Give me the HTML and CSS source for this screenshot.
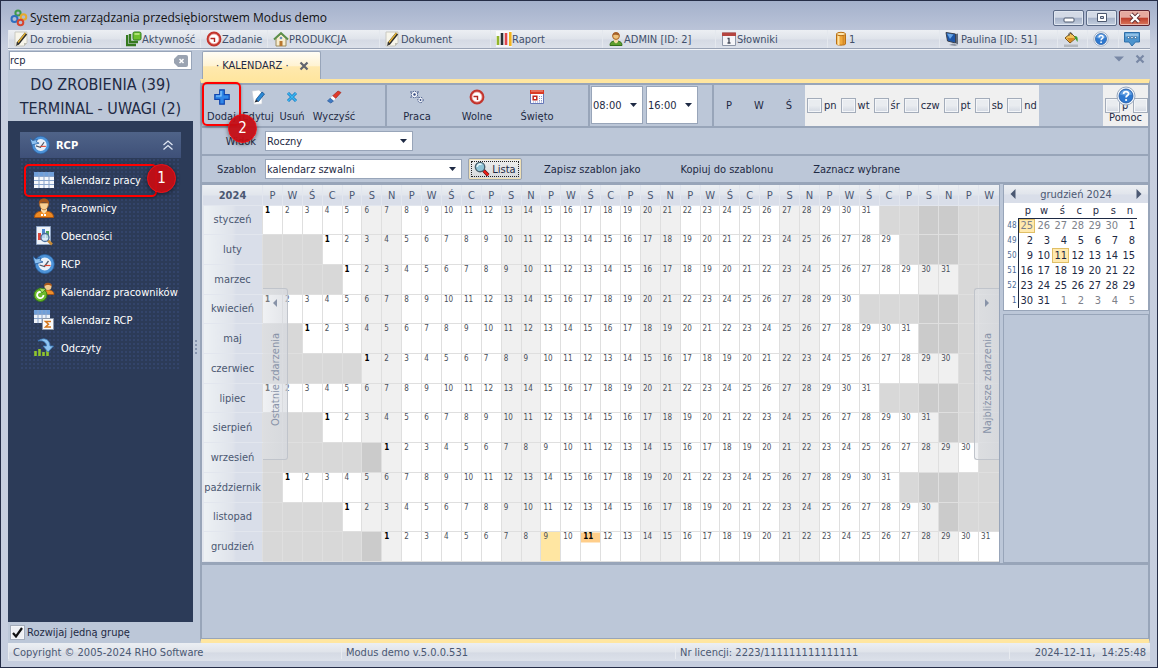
FILE: index.html
```html
<!DOCTYPE html>
<html lang="pl">
<head>
  <meta charset="UTF-8" />
  <meta name="viewport" content="width=device-width, initial-scale=1" />
  <title>System zarządzania przedsiębiorstwem Modus demo</title>
  <link rel="stylesheet" href="styles.css">
</head>
<body>

<!-- Icon set -->
<svg class="sprite" aria-hidden="true">
  <symbol id="i-logo" viewBox="0 0 18 18">
    <g fill="none" stroke-width="2">
      <circle cx="8" cy="4" r="2.6" stroke="#3f9a4a"/>
      <circle cx="13.5" cy="8" r="2.8" stroke="#e6a92c"/>
      <circle cx="4.5" cy="10" r="3" stroke="#2f6fc0"/>
      <circle cx="10.5" cy="13.5" r="2.8" stroke="#d8452f"/>
    </g>
  </symbol>
  <symbol id="i-note" viewBox="0 0 16 16">
    <path d="M1 1h12v11l-3 3H1z" fill="#f7f5ea" stroke="#c9c9c2"/>
    <path d="M13 12l-3 3v-3z" fill="#bdbdb4"/>
    <path d="M3.500 13L12 2.500" stroke="#2b2b2b" stroke-width="3"/>
    <path d="M4 11.500L11.500 2" stroke="#e9b738" stroke-width="1.300"/>
    <path d="M2 15l.8-3 2 1.500z" fill="#333"/>
  </symbol>
  <symbol id="i-activity" viewBox="0 0 16 16">
    <path d="M1 4v10h9M4 3v8h8" fill="none" stroke="#35791f" stroke-width="2.400"/>
    <rect x="7" y="1" width="8" height="8" rx="1.500" fill="#6fc02c" stroke="#2f7d1c"/>
    <path d="M8.500 3h5" stroke="#c5ee8e" stroke-width="1.500"/>
  </symbol>
  <symbol id="i-clock" viewBox="0 0 16 16">
    <circle cx="8" cy="8" r="6.200" fill="#fff" stroke="#c3342c" stroke-width="2.400"/>
    <circle cx="8" cy="8" r="5" fill="none" stroke="#eaa19c" stroke-width=".8"/>
    <path d="M4.500 7.500H8.500V11" fill="none" stroke="#b3251f" stroke-width="1.400"/>
  </symbol>
  <symbol id="i-house" viewBox="0 0 16 16">
    <path d="M3 7v8h10V7L8 3z" fill="#f6edcf" stroke="#9b8a5e"/>
    <path d="M1 8.500L8 2l7 6.500" fill="none" stroke="#5c8f4a" stroke-width="2"/>
    <path d="M6.500 15V10h3v5z" fill="#b9772f"/>
    <circle cx="8" cy="7" r="1.300" fill="#6c94bd"/>
  </symbol>
  <symbol id="i-report" viewBox="0 0 16 16">
    <path d="M0 0h16v16H0z" fill="#fff" opacity=".7"/>
    <path d="M2 5v9" stroke="#93b52c" stroke-width="2.600"/>
    <path d="M6 2v12" stroke="#2a2f35" stroke-width="2.600"/>
    <path d="M10 2v12" stroke="#e0474c" stroke-width="2.600"/>
    <path d="M14.300 1v14" stroke="#f2b31c" stroke-width="2.600"/>
  </symbol>
  <symbol id="i-user" viewBox="0 0 16 16">
    <path d="M2 14.500c0-4 3-4.500 6-4.500s6 .5 6 4.500z" fill="#5d9e2c" stroke="#346f1b"/>
    <path d="M6 8h4v3l-2 1.500L6 11z" fill="#f3d9a4"/>
    <circle cx="8" cy="5" r="3.400" fill="#efc27a" stroke="#a8642a"/>
    <path d="M4.500 4.500C4.500 0 11.500 0 11.500 4.500 9 4.500 7 3 4.500 4.500z" fill="#a4602a"/>
  </symbol>
  <symbol id="i-dict" viewBox="0 0 16 16">
    <path d="M1.500 2h13v12.500h-13z" fill="#f5f5f8" stroke="#8e97a8"/>
    <path d="M1 1.500h14V5H1z" fill="#b5443f"/>
    <path d="M6.500 7.500H8V12M6.500 12h3" fill="none" stroke="#444b59" stroke-width="1.300"/>
  </symbol>
  <symbol id="i-db" viewBox="0 0 16 16">
    <path d="M3.500 3v10c0 1.500 9 1.500 9 0V3z" fill="#f0a83a" stroke="#b86f14"/>
    <path d="M5.500 4v10" stroke="#fde1a3" stroke-width="2"/>
    <path d="M10.500 4v10" stroke="#c67a1e" stroke-width="2" opacity=".6"/>
    <ellipse cx="8" cy="3" rx="4.500" ry="1.700" fill="#fde4ab" stroke="#b86f14"/>
  </symbol>
  <symbol id="i-monitor" viewBox="0 0 16 16">
    <path d="M1 1.500l9.500 1.500v9L2.500 10z" fill="#1e56a8" stroke="#3b4250"/>
    <path d="M2 2.500l6.500 1L5 8z" fill="#69a6e6"/>
    <path d="M11 3l2-.5v11l-2-1z" fill="#626b7a"/>
    <path d="M4 14l6 1 3-1-5-1.500z" fill="#8f97a6"/>
  </symbol>
  <symbol id="i-bucket" viewBox="0 0 16 16">
    <path d="M1 13.500h14V16H1z" fill="#b3b8bf"/>
    <path d="M2 7l6-5 5 5-6 5z" fill="#f1c25a" stroke="#7b5417"/>
    <path d="M4 7h8l-5 4.500z" fill="#d98a24"/>
    <path d="M6 5C5 1 9 0 9 4" fill="none" stroke="#555"/>
    <path d="M12 5c3 0 3 3 2.500 6-1-1-1.500-3-3-4z" fill="#3c9a32"/>
  </symbol>
  <symbol id="i-help" viewBox="0 0 20 20">
    <circle cx="10" cy="10" r="9" fill="#f4f8fd" stroke="#97a7bd"/>
    <circle cx="10" cy="10" r="7" fill="#2e78cf" stroke="#1f569e" stroke-width=".8"/>
    <path d="M4 8.500a6.200 6.200 0 0 1 12 0c-4 1.500-8 1.500-12 0z" fill="#76aeea" opacity=".7"/>
    <path d="M7.600 8c0-3.200 5-3 5-.3 0 1.800-2.500 1.800-2.500 3.800" fill="none" stroke="#fff" stroke-width="1.800"/>
    <circle cx="10.100" cy="14" r="1.100" fill="#fff"/>
  </symbol>
  <symbol id="i-chat" viewBox="0 0 16 16">
    <path d="M.5 1.500h15v9.500h-4L8 15l-3-4H.5z" fill="#4d94cd" stroke="#2f6fa8"/>
    <path d="M1.500 2.500h13v3h-13z" fill="#8fc0e6"/>
    <path d="M3.500 5.500h2v2h-2zM7 5.500h2v2H7zM10.500 5.500h2v2h-2z" fill="#fff" stroke="#2c5f91" stroke-width=".6"/>
  </symbol>
  <symbol id="i-plus" viewBox="0 0 16 16">
    <path d="M5.700.8h4.600v4.900h4.900v4.600h-4.900v4.900H5.700v-4.900H.8V5.700h4.900z" fill="#2f86e8" stroke="#1046b0" stroke-width="1.200"/>
    <path d="M7 2v5H2" fill="none" stroke="#8fd0ff" stroke-width="1.200"/>
  </symbol>
  <symbol id="i-edit" viewBox="0 0 16 16">
    <path d="M2 2l7-1 3 3v11l-8 .5z" fill="#fff" stroke="#c5ccd6" stroke-width=".7"/>
    <path d="M6 10.500L12 3l2.500 2L8.500 12.500z" fill="#2a8ad6" stroke="#17508f" stroke-width=".8"/>
    <path d="M4.500 13.500L6 10.500l2.500 2z" fill="#232b38"/>
  </symbol>
  <symbol id="i-delete" viewBox="0 0 16 16">
    <path d="M4 4l8 8M12 4l-8 8" stroke="#1679c4" stroke-width="3"/>
    <path d="M4 4l8 8M12 4l-8 8" stroke="#3cb7ef" stroke-width="1.500"/>
  </symbol>
  <symbol id="i-eraser" viewBox="0 0 16 16">
    <path d="M6.500 7L12 2l3 1.500L9.500 9.500z" fill="#e0392a" stroke="#a3261b" stroke-width=".7"/>
    <path d="M6.500 7l3 2.500L7.500 12 4.200 9.200z" fill="#fff"/>
    <path d="M4.200 9.200L7.500 12l-2.700 2L1.500 12z" fill="#3f7ac4" stroke="#2c5a9a" stroke-width=".7"/>
  </symbol>
  <symbol id="i-gears" viewBox="0 0 16 16">
    <g fill="#f2f5fa" stroke="#34497f" stroke-dasharray="1.500 1">
      <circle cx="5.500" cy="5.500" r="3.200"/>
      <circle cx="11.500" cy="11" r="2.600"/>
    </g>
    <circle cx="5.500" cy="5.500" r="1.200" fill="#34497f"/>
    <path d="M2 2v2M9 2v2M2 7.500V9M9 7.500V9" stroke="#34497f" stroke-width=".8"/>
    <circle cx="11.500" cy="11" r=".9" fill="#34497f"/>
  </symbol>
  <symbol id="i-holiday" viewBox="0 0 16 16">
    <path d="M1.500 1.500h13v13h-13z" fill="#fbfbff" stroke="#6577b8"/>
    <path d="M1 1h14v4H1z" fill="#d93a24"/>
    <path d="M2 2h12" stroke="#f6a08f"/>
    <path d="M4.200 7.200h3.600v3.600H4.200z" fill="#fff" stroke="#c2251c" stroke-width="1.500"/>
    <path d="M10 7.500h4M10 9.500h4M10 11.500h4M4 13h10" stroke="#8f9cc9" stroke-dasharray="1 1"/>
  </symbol>
  <symbol id="i-magnifier" viewBox="0 0 18 18">
    <path d="M10.500 10.500L16 16" stroke="#5b1110" stroke-width="4"/>
    <path d="M11 11l5 5" stroke="#ee1d16" stroke-width="2.600"/>
    <circle cx="6.800" cy="6.800" r="5.300" fill="#8fc5d8" stroke="#49606d" stroke-width="1.500"/>
    <path d="M3.500 6.500C4 3.500 7 3 8.500 4" fill="none" stroke="#e6f6fb" stroke-width="1.800"/>
  </symbol>
  <symbol id="i-table" viewBox="0 0 22 22">
    <path d="M1 3h20v16H1z" fill="#f6f8fb"/>
    <path d="M1 3h20v4H1z" fill="#6f9fda"/>
    <path d="M6 3v16M11 3v16M16 3v16M1 7.500h20M1 11.500h20M1 15.500h20" stroke="#8aa5cc"/>
  </symbol>
  <symbol id="i-worker" viewBox="0 0 22 22">
    <path d="M1.500 20.500c0-5 4-6.500 9.500-6.500s9.500 1.500 9.500 6.500z" fill="#ee8a22" stroke="#a9520f"/>
    <path d="M8 11h6v3l-3 3-3-3z" fill="#f8d9a6"/>
    <path d="M6.500 6c0 9 9 9 9 0z" fill="#f7cf94" stroke="#b36b2a" stroke-width=".8"/>
    <path d="M6 7C4.500-.5 17.500-.5 16 7c-2-2.500-8-2.500-10 0z" fill="#a7571c"/>
    <path d="M8 18h6" stroke="#fff" stroke-width="1.800" stroke-dasharray="2 1"/>
  </symbol>
  <symbol id="i-presence" viewBox="0 0 22 22">
    <path d="M3.500 1.500h14v18h-14z" fill="#eef3f9" stroke="#8fa4c4"/>
    <path d="M5 8h3v7H5z" fill="#d9463d"/>
    <path d="M9 4h3v9H9z" fill="#4d86cf"/>
    <path d="M13 6h3v7h-3z" fill="#4fa45a"/>
    <path d="M14.500 15l4.500 4.500" stroke="#c78a35" stroke-width="2.500"/>
    <circle cx="12" cy="12.500" r="4" fill="#cfe6f6" fill-opacity=".8" stroke="#4a6e9c" stroke-width="1.300"/>
  </symbol>
  <symbol id="i-history" viewBox="0 0 22 22">
    <circle cx="11.800" cy="11" r="8" fill="#eaf1f9" stroke="#4d93d8" stroke-width="3"/>
    <circle cx="11.800" cy="11" r="9.600" fill="none" stroke="#2a64a8" stroke-width=".7"/>
    <path d="M0 3.500l2 7.500 8-2-3-1.500 1-2.500-5 1z" fill="#8dc2f1" stroke="#235b9d" stroke-width=".8"/>
    <path d="M6.500 12l5 1.500L15.500 8" fill="none" stroke="#4f5968" stroke-width="1.300"/>
    <path d="M11.500 12.500h6" stroke="#e3452e" stroke-width="1.200"/>
  </symbol>
  <symbol id="i-workercal" viewBox="0 0 22 22">
    <path d="M9 13.500c0-4 3-4.500 6-4.500s6 1 6 4.500z" fill="#ef8f2b" stroke="#a9520f" stroke-width=".8"/>
    <circle cx="15" cy="5.500" r="3.500" fill="#f4ca8d"/>
    <path d="M11 5.500C10.500.5 19.500.5 19 5.500c-2-2-6-2-8 0z" fill="#a7571c"/>
    <circle cx="7.500" cy="14" r="6.500" fill="#6dbb2c" stroke="#34791a"/>
    <path d="M10.500 14a3.200 3.200 0 1 1-2-3" fill="none" stroke="#fff" stroke-width="1.800"/>
    <path d="M6 7l7 1-4 4z" fill="#a4dc5e" stroke="#34791a" stroke-width=".7"/>
  </symbol>
  <symbol id="i-calrcp" viewBox="0 0 22 22">
    <path d="M1 1h16v13H1z" fill="#edf2f9"/>
    <path d="M1 1h16v4H1z" fill="#6f9fda"/>
    <path d="M5 1v13M9 1v13M13 1v13M1 5.500h16M1 9.500h16" stroke="#8aa5cc"/>
    <path d="M9.500 9.500h11v11h-11z" fill="#fbfbfb" stroke="#8d98aa"/>
    <path d="M18 12.500h-5.500l3 2.700-3 2.800H18" fill="none" stroke="#d3761d" stroke-width="1.500"/>
  </symbol>
  <symbol id="i-readings" viewBox="0 0 22 22">
    <path d="M2.500 19v-5M6.500 19v-7M10.500 19v-4M14.500 19v-6" stroke="#8fc52e" stroke-width="2.600"/>
    <path d="M5 4c6-4.500 12-1.500 12 5h3.500L15 15l-5-6h3.500c0-4-4-6-8.500-5z" fill="#8fc4ef" stroke="#3a77b8" stroke-width=".8"/>
  </symbol>
  <symbol id="i-collapse" viewBox="0 0 12 12">
    <path d="M1.500 6L6 2l4.500 4M1.500 10.500L6 6.500l4.500 4" fill="none" stroke="#dfe6f3" stroke-width="1.300"/>
  </symbol>
  <symbol id="i-x" viewBox="0 0 10 10">
    <path d="M1.500 1.500l7 7M8.500 1.500l-7 7" stroke="currentColor" stroke-width="2.200"/>
  </symbol>
  <symbol id="i-down" viewBox="0 0 10 6"><path d="M0 .5h10L5 5.500z" fill="currentColor"/></symbol>
  <symbol id="i-left" viewBox="0 0 6 10"><path d="M5.500 0v10L.5 5z" fill="currentColor"/></symbol>
  <symbol id="i-right" viewBox="0 0 6 10"><path d="M.5 0v10l5-5z" fill="currentColor"/></symbol>
</svg>

<div class="window">
  <header class="titlebar">
    <svg class="icon-logo"><use href="#i-logo"/></svg>
    <h1>System zarządzania przedsiębiorstwem Modus demo</h1>
    <div class="window-buttons">
      <button aria-label="Minimalizuj"><svg viewBox="0 0 14 12"><rect x="2" y="6" width="10" height="4" rx="1" fill="#fff" stroke="#4c586e"/></svg></button>
      <button aria-label="Maksymalizuj"><svg viewBox="0 0 14 12"><path d="M2.500 1.500h9v8h-9zM5.500 4.500h3v2h-3z" fill="#fff" fill-rule="evenodd" stroke="#4c586e"/></svg></button>
      <button class="close" aria-label="Zamknij"><svg viewBox="0 0 14 12"><path d="M3 2l8 8M11 2l-8 8" stroke="#5c2a30" stroke-width="4"/><path d="M3 2l8 8M11 2l-8 8" stroke="#fff" stroke-width="2.400"/></svg></button>
    </div>
  </header>

  <nav class="menubar">
    <button><svg><use href="#i-note"/></svg>Do zrobienia</button>
    <button><svg><use href="#i-activity"/></svg>Aktywność</button>
    <button><svg><use href="#i-clock"/></svg>Zadanie</button>
    <button><svg><use href="#i-house"/></svg>PRODUKCJA</button>
    <button><svg><use href="#i-note"/></svg>Dokument</button>
    <button><svg><use href="#i-report"/></svg>Raport</button>
    <button><svg><use href="#i-user"/></svg>ADMIN [ID: 2]</button>
    <button><svg><use href="#i-dict"/></svg>Słowniki</button>
    <button><svg><use href="#i-db"/></svg>1</button>
    <button><svg><use href="#i-monitor"/></svg>Paulina [ID: 51]</button>
    <button aria-label="Kolory"><svg><use href="#i-bucket"/></svg></button>
    <button aria-label="Pomoc"><svg><use href="#i-help"/></svg></button>
    <button aria-label="Wiadomości"><svg><use href="#i-chat"/></svg></button>
  </nav>

  <div class="workspace">
    <aside class="sidebar">
      <div class="search">
        <input type="text" value="rcp" aria-label="Szukaj w menu">
        <button aria-label="Wyczyść"><svg viewBox="0 0 14 12"><path d="M4 0h8a2 2 0 0 1 2 2v8a2 2 0 0 1-2 2H4L0 8V4z" fill="#9aa3b1"/><path d="M5.500 4l4 4M9.500 4l-4 4" stroke="#fff" stroke-width="1.500"/></svg></button>
      </div>
      <a class="counter" href="#">DO ZROBIENIA (39)</a>
      <a class="counter" href="#">TERMINAL - UWAGI (2)</a>
      <nav class="tree">
        <button class="group">
          <svg class="icon-lg"><use href="#i-history"/></svg>RCP
          <svg class="collapse"><use href="#i-collapse"/></svg>
        </button>
        <ul>
          <li class="marked">
            <a href="#"><svg><use href="#i-table"/></svg>Kalendarz pracy</a>
            <span class="step step-one">1</span>
          </li>
          <li><a href="#"><svg><use href="#i-worker"/></svg>Pracownicy</a></li>
          <li><a href="#"><svg><use href="#i-presence"/></svg>Obecności</a></li>
          <li><a href="#"><svg><use href="#i-history"/></svg>RCP</a></li>
          <li><a href="#"><svg><use href="#i-workercal"/></svg>Kalendarz pracowników</a></li>
          <li><a href="#"><svg><use href="#i-calrcp"/></svg>Kalendarz RCP</a></li>
          <li><a href="#"><svg><use href="#i-readings"/></svg>Odczyty</a></li>
        </ul>
      </nav>
      <label class="single"><input type="checkbox" checked>Rozwijaj jedną grupę</label>
    </aside>

    <div class="splitter"><i></i><i></i><i></i><i></i></div>

    <main class="content">
      <div class="tabs">
        <div class="tab">
          <span>· KALENDARZ ·</span>
          <button aria-label="Zamknij kartę"><svg><use href="#i-x"/></svg></button>
        </div>
        <div class="tab-tools">
          <button aria-label="Lista kart"><svg class="arrow-down"><use href="#i-down"/></svg></button>
          <button aria-label="Zamknij"><svg><use href="#i-x"/></svg></button>
        </div>
      </div>

      <div class="document">
        <div class="toolbar">
          <div class="tools tools-edit">
            <button class="marked-tool"><svg><use href="#i-plus"/></svg>Dodaj<span class="step step-two">2</span></button>
            <button><svg><use href="#i-edit"/></svg>Edytuj</button>
            <button><svg><use href="#i-delete"/></svg>Usuń</button>
            <button><svg><use href="#i-eraser"/></svg>Wyczyść</button>
          </div>
          <div class="tools tools-type">
            <button><svg><use href="#i-gears"/></svg>Praca</button>
            <button><svg><use href="#i-clock"/></svg>Wolne</button>
            <button><svg><use href="#i-holiday"/></svg>Święto</button>
          </div>
          <div class="hours">
            <select aria-label="Od"><option>08:00</option></select>
            <select aria-label="Do"><option>16:00</option></select>
          </div>
          <div class="kinds">
            <button>P</button>
            <button>W</button>
            <button>Ś</button>
          </div>
          <div class="weekdays">
            <label><input type="checkbox">pn</label>
            <label><input type="checkbox">wt</label>
            <label><input type="checkbox">śr</label>
            <label><input type="checkbox">czw</label>
            <label><input type="checkbox">pt</label>
            <label><input type="checkbox">sb</label>
            <label><input type="checkbox">nd</label>
          </div>
          <div class="help">
            <label><input type="checkbox">p</label>
            <input type="checkbox" aria-label="w">
            <button><svg><use href="#i-help"/></svg>Pomoc</button>
          </div>
        </div>

        <div class="form-row">
          <label for="view">Widok</label>
          <select id="view" class="view"><option>Roczny</option></select>
        </div>

        <div class="form-row">
          <label for="template">Szablon</label>
          <select id="template" class="template"><option>kalendarz szwalni</option></select>
          <button class="list"><svg><use href="#i-magnifier"/></svg>Lista</button>
          <div class="actions">
            <button>Zapisz szablon jako</button>
            <button>Kopiuj do szablonu</button>
            <button>Zaznacz wybrane</button>
          </div>
        </div>

        <div class="calendar">
          <div class="year">
            <table id="year"></table>
            <button class="events events-prev"><svg><use href="#i-left"/></svg><span>Ostatnie zdarzenia</span></button>
            <button class="events events-next"><svg><use href="#i-right"/></svg><span>Najbliższe zdarzenia</span></button>
          </div>
          <div class="side">
            <div class="month">
              <div class="month-head">
                <button aria-label="Poprzedni miesiąc"><svg><use href="#i-left"/></svg></button>
                <span>grudzień 2024</span>
                <button aria-label="Następny miesiąc"><svg><use href="#i-right"/></svg></button>
              </div>
              <table id="month"></table>
            </div>
            <div class="side-panel"></div>
          </div>
        </div>

        <div class="bottom-panel"></div>
      </div>
    </main>
  </div>

  <footer class="statusbar">
    <span>Copyright © 2005-2024 RHO Software</span>
    <span>Modus demo v.5.0.0.531</span>
    <span>Nr licencji: 2223/111111111111111</span>
    <span>2024-12-11,&nbsp; 14:25:48</span>
  </footer>
</div>

<script src="script.js"></script>
</body>
</html>
```
FILE: styles.css
```css
* {
  box-sizing: border-box;
}

body {
  margin: 0;
  height: 100vh;
  font-family: "DejaVu Sans Condensed", Tahoma, "DejaVu Sans", sans-serif;
  font-size: 11px;
  color: #1e2a44;
}

button, input, select {
  font: inherit;
  color: inherit;
}

button {
  padding: 0;
  border: none;
  background: none;
  cursor: pointer;
  white-space: nowrap;
}

a {
  color: inherit;
  text-decoration: none;
}

svg {
  display: block;
  flex: none;
  width: 16px;
  height: 16px;
}

.sprite {
  position: absolute;
  width: 0;
  height: 0;
}

/* Window frame */
.window {
  display: flex;
  flex-direction: column;
  height: 100%;
  padding: 0 7px 6px;
  border: 1px solid #252d47;
  background: linear-gradient(#a4b1cc, #c8cfdf 46px, #c6cedf);
}

.titlebar {
  display: flex;
  align-items: center;
  flex: none;
  height: 29px;
  padding: 4px 0 0 2px;
  gap: 2px;
}

.titlebar h1 {
  flex: 1;
  margin: 0;
  font-family: "Open Sans", "Segoe UI", sans-serif;
  font-size: 12px;
  font-weight: normal;
  color: #111;
}

.icon-logo {
  width: 18px;
  height: 18px;
}

.window-buttons {
  display: flex;
  gap: 2px;
}

.window-buttons button {
  display: flex;
  align-items: center;
  justify-content: center;
  width: 31px;
  height: 16px;
  border: 1px solid #5b6a86;
  border-radius: 2px;
  background: linear-gradient(#d3dae6 45%, #a5b2c9 50%, #c3cede);
  box-shadow: inset 0 0 0 1px #dfe6f0;
}

.window-buttons svg {
  width: 14px;
  height: 12px;
}

.window-buttons .close {
  border-color: #5c2230;
  background: linear-gradient(#e5a99f 45%, #bd3d2b 50%, #d9775e);
  box-shadow: inset 0 0 0 1px #e9b5ab;
}

/* Menu and status bars */
.menubar {
  display: grid;
  grid-template-columns: 112fr 80fr 67fr 112fr 111fr 112fr 113fr 112fr 112fr 118fr 30fr 31fr 32fr;
  flex: none;
  height: 19px;
  border-bottom: 1px solid #99a3b5;
  background: linear-gradient(#eceff3, #dfe3ea 50%, #d5dae4 55%, #dce1ea);
  color: #414f6b;
}

.menubar button {
  display: flex;
  align-items: center;
  padding-left: 5px;
  border-left: 1px solid #e4e8ee;
}

.workspace {
  display: flex;
  flex: 1;
  min-height: 0;
  border-top: 1px solid #f2f4f8;
  background: #bcc7d8;
}

.statusbar {
  display: grid;
  grid-template-columns: 333fr 334fr 334fr 141fr;
  align-items: center;
  flex: none;
  height: 18px;
  background: linear-gradient(#eceff3, #dfe3ea 50%, #d5dae4 55%, #dce1ea);
  color: #4a5873;
}

.statusbar span {
  padding: 0 4px;
  border-left: 1px solid #e8ebf0;
}

.statusbar span:last-child {
  text-align: right;
}

/* Sidebar */
.sidebar {
  display: flex;
  flex-direction: column;
  flex: none;
  width: 185px;
}

.search {
  display: flex;
  align-items: center;
  height: 19px;
  margin: 1px 1px 3px;
  padding-right: 3px;
  border: 1px solid #98a5b9;
  background: #fff;
}

.search input {
  flex: 1;
  min-width: 0;
  padding: 0;
  border: none;
  outline: none;
  background: none;
}

.search svg {
  width: 14px;
  height: 12px;
}

.counter {
  height: 24px;
  font-size: 16px;
  line-height: 24px;
  text-align: center;
}

.tree {
  flex: 1;
  padding: 11px 12px;
  background: #2c3b58;
  color: #fff;
}

.group {
  display: flex;
  align-items: center;
  width: 100%;
  height: 26px;
  padding: 0 7px 0 10px;
  gap: 6px;
  background: linear-gradient(#4f6388, #3e5078);
  font-weight: bold;
}

.group .icon-lg {
  width: 20px;
  height: 20px;
}

.group .collapse {
  width: 12px;
  height: 12px;
  margin-left: auto;
}

.tree ul {
  margin: 0;
  padding: 8px 0;
  list-style: none;
  background-color: #2c3b58;
  background-image: radial-gradient(#33446a 1px, transparent 1px);
  background-size: 4px 4px;
}

.tree li {
  position: relative;
}

.tree li a {
  display: flex;
  align-items: center;
  height: 28px;
  padding-left: 13px;
  gap: 6px;
  white-space: nowrap;
}

.tree li svg {
  width: 22px;
  height: 22px;
}

.single {
  display: flex;
  align-items: center;
  height: 21px;
  padding-left: 2px;
  gap: 2px;
}

/* Numbered step markers */
.marked::before,
.marked-tool::before {
  content: "";
  position: absolute;
  border: 2px solid #f00;
  border-radius: 5px;
  box-shadow: 0 1px 3px rgba(0, 0, 0, 0.4);
}

.marked::before {
  inset: -2px 24px -3px 4px;
}

.marked-tool::before {
  inset: -3px 0 0;
}

.step {
  position: absolute;
  width: 29px;
  height: 29px;
  border: 1px solid #ee1015;
  border-radius: 50%;
  background: rgba(196, 13, 20, 0.95);
  box-shadow: 0 1px 4px rgba(0, 0, 0, 0.5);
  color: #fff;
  font-size: 15px;
  line-height: 27px;
  text-align: center;
  z-index: 2;
}

.step-one {
  top: -2px;
  right: 5px;
}

.step-two {
  top: 29px;
  left: 26px;
}

.splitter {
  display: flex;
  flex-direction: column;
  align-items: center;
  justify-content: center;
  flex: none;
  width: 6px;
  gap: 2px;
}

.splitter i {
  width: 2px;
  height: 2px;
  background: #8896b0;
}

/* Tick boxes */
input[type="checkbox"] {
  appearance: none;
  flex: none;
  width: 15px;
  height: 15px;
  margin: 0;
  border: 1px solid #a3acba;
  background: linear-gradient(#e9ecf0 50%, #d2d8e2);
  box-shadow: inset 0 0 0 1px #f4f6f9;
}

input[type="checkbox"]:checked {
  background: url("data:image/svg+xml,%3Csvg xmlns='http://www.w3.org/2000/svg' viewBox='0 0 13 13'%3E%3Cpath d='M2 7l3 3.500L11 2' fill='none' stroke='%23111' stroke-width='2.200'/%3E%3C/svg%3E") #eef0f4;
}

/* Tabs */
.content {
  display: flex;
  flex-direction: column;
  flex: 1;
  min-width: 0;
  padding-left: 1px;
}

.tabs {
  display: flex;
  justify-content: space-between;
  align-items: flex-end;
  flex: none;
  height: 29px;
  padding: 0 5px 0 2px;
}

.tab {
  display: flex;
  align-items: center;
  justify-content: space-between;
  width: 119px;
  height: 28px;
  padding: 0 11px 0 13px;
  border: 1px solid #98a5b9;
  border-bottom: none;
  border-radius: 2px 2px 0 0;
  background: linear-gradient(#fffdf5, #fff3d3 50%, #ffe9ae 55%, #ffe6a0);
  white-space: nowrap;
}

.tab svg {
  width: 10px;
  height: 10px;
  color: #62656f;
}

.tab-tools {
  display: flex;
  align-items: center;
  align-self: flex-start;
  height: 18px;
  gap: 11px;
  color: #7888a5;
}

.tab-tools svg {
  width: 10px;
  height: 10px;
}

.tab-tools .arrow-down {
  height: 6px;
}

.document {
  display: flex;
  flex-direction: column;
  flex: 1;
  min-height: 0;
  border: 1px solid #98a5b9;
  border-top: 4px solid #ffe6a0;
  border-bottom: 4px solid #ffe6a0;
  border-radius: 0 0 2px 2px;
}

/* Toolbar */
.toolbar {
  display: flex;
  flex: none;
  height: 45px;
  border: 1px solid #98a5b9;
  border-width: 2px 1px;
}

.tools {
  display: flex;
  border-right: 2px solid #98a5b9;
}

.tools button {
  display: flex;
  flex-direction: column;
  align-items: center;
  justify-content: space-between;
  padding: 4px 0 3px;
}

.tools-edit {
  width: 185px;
}

.tools-edit button {
  width: 34px;
}

.tools-edit .marked-tool {
  position: relative;
  width: 39px;
}

.tools-edit button:last-child {
  width: 50px;
}

.tools-type {
  width: 203px;
}

.tools-type button {
  width: 60px;
}

.hours {
  display: flex;
  width: 124px;
  padding: 1px;
  gap: 3px;
  border-right: 2px solid #98a5b9;
}

select {
  appearance: none;
  height: 20px;
  padding: 0 16px 0 1px;
  border: 1px solid #98a5b9;
  border-radius: 0;
  background: url("data:image/svg+xml,%3Csvg xmlns='http://www.w3.org/2000/svg' viewBox='0 0 7 4'%3E%3Cpath d='M0 0h7L3.500 4z' fill='%231e2a44'/%3E%3C/svg%3E") no-repeat right 5px center / 7px 4px #fff;
}

.hours select {
  width: 52px;
  height: 38px;
}

.kinds {
  display: flex;
  width: 91px;
}

.kinds button {
  width: 30px;
}

.weekdays {
  display: flex;
  align-items: center;
  padding: 0 2px;
  gap: 4px;
  background: #f0f0f0;
}

.weekdays label {
  display: flex;
  align-items: center;
  gap: 2px;
}

.help {
  position: relative;
  display: flex;
  align-items: center;
  justify-content: space-between;
  width: 45px;
  margin-left: auto;
  padding: 0 0 0 2px;
  background: #f0f0f0;
}

.help label {
  display: flex;
  align-items: center;
  gap: 2px;
}

.help button {
  position: absolute;
  inset: 1px 0 0;
  display: flex;
  flex-direction: column;
  align-items: center;
  gap: 5px;
}

.help svg {
  width: 20px;
  height: 20px;
}

/* Filter rows */
.form-row {
  display: flex;
  align-items: center;
  flex: none;
  height: 28px;
  border: 1px solid #98a5b9;
  border-width: 0 1px 2px;
}

.form-row > label {
  width: 54px;
  margin-right: 9px;
  text-align: right;
}

.view {
  width: 148px;
}

.template {
  width: 197px;
}

.list {
  display: flex;
  align-items: center;
  justify-content: center;
  width: 54px;
  height: 22px;
  margin-left: 6px;
  gap: 2px;
  border: 1px solid #9aa3b0;
  border-radius: 2px;
  outline: 1px dotted #222;
  outline-offset: -4px;
  background: linear-gradient(#efefee, #d5d8dd);
  box-shadow: inset 0 0 0 1px #eedfb4;
}

.actions {
  display: flex;
  padding-left: 22px;
  gap: 40px;
}

/* Year calendar */
.calendar {
  display: flex;
  flex: 1;
  min-height: 0;
  gap: 3px;
}

.year {
  position: relative;
  display: grid;
  flex: 1;
  min-width: 0;
  border: 1px solid #98a5b9;
}

.year table {
  width: 100%;
  height: 100%;
  table-layout: fixed;
  border-collapse: collapse;
}

.year th,
.year td {
  padding: 0;
  border: 1px solid #dfdfdf;
  border-width: 0 0 1px 1px;
  overflow: hidden;
}

.year th {
  border-color: #e2e6ee;
  font-weight: normal;
  color: #4b5872;
}

.year thead th {
  height: 20px;
  padding-top: 2px;
  background: linear-gradient(#eceff3, #e1e5ec 50%, #d9dee9 55%);
}

.year thead th:first-child {
  width: 60px;
  font-weight: bold;
}

.year tbody th {
  background: linear-gradient(90deg, #edf1f4, #dfe3eb 50%, #d9dee9 55%);
}

.year td {
  padding: 0 0 0 2px;
  background: #fff;
  font-size: 8px;
  line-height: 10px;
  vertical-align: top;
  color: #4a4f59;
}

.year .weekend {
  background: #f0f0f0;
}

.year .empty {
  background: #d8d8d8;
}

.year .empty.weekend {
  background: #cbcbcb;
}

.year .first {
  font-weight: bold;
  color: #000;
}

.year .selected {
  background: #ffe6a2;
}

.year .today {
  background: linear-gradient(#ffce8a 10px, #fff 10px);
  font-weight: bold;
  color: #000;
}

.events {
  position: absolute;
  top: 103px;
  display: flex;
  flex-direction: column;
  align-items: center;
  width: 25px;
  height: 172px;
  padding-top: 10px;
  gap: 26px;
  border: 1px solid #c0c4cb;
  background: linear-gradient(90deg, rgba(225, 228, 233, 0.5), rgba(214, 217, 223, 0.7));
  color: #8893a8;
}

.events svg {
  width: 6px;
  height: 8px;
}

.events span {
  writing-mode: vertical-rl;
  transform: rotate(180deg);
}

.events-prev {
  left: 61px;
  border-left: none;
  border-radius: 0 3px 3px 0;
}

.events-next {
  right: 0;
  border-right: none;
  border-radius: 3px 0 0 3px;
}

/* Month calendar */
.side {
  display: flex;
  flex-direction: column;
  flex: none;
  width: 146px;
  gap: 3px;
}

.month {
  height: 127px;
  border: 1px solid #98a5b9;
  background: #fff;
}

.month-head {
  display: flex;
  align-items: center;
  justify-content: space-between;
  height: 18px;
  padding: 0 6px;
  background: linear-gradient(#eceff3, #e1e5ec 50%, #d9dee9 55%);
  color: #4b5872;
}

.month-head svg {
  width: 6px;
  height: 10px;
}

.month table {
  margin-left: 1px;
  border-collapse: collapse;
  table-layout: fixed;
  width: 132px;
}

.month th,
.month td {
  width: 17px;
  height: 15px;
  padding: 0 2px 0 0;
  font-weight: normal;
  line-height: 13px;
  text-align: right;
}

.month thead th {
  padding-right: 4px;
  border-bottom: 1px solid #1e2a44;
}

.month thead th:first-child,
.month tbody th {
  width: 13px;
  border-bottom: none;
}

.month tbody th {
  padding-right: 1px;
  border-right: 1px solid #1e2a44;
  font-size: 8px;
  color: #4a6a96;
}

.month .other {
  color: #7d818a;
}

.month .mark {
  background: #ffe9ae;
  box-shadow: inset 0 0 0 1px #e0bf66;
}

.side-panel {
  flex: 1;
  border: 1px solid #98a5b9;
}

.bottom-panel {
  flex: none;
  height: 76px;
  border: 1px solid #98a5b9;
  border-top-width: 2px;
}
```
FILE: script.js
```js
const YEAR = 2024;
const DAYS = ['P', 'W', 'Ś', 'C', 'P', 'S', 'N'];
const MONTHS = ['styczeń', 'luty', 'marzec', 'kwiecień', 'maj', 'czerwiec', 'lipiec', 'sierpień', 'wrzesień', 'październik', 'listopad', 'grudzień'];
const COLUMNS = 37;

// Monday = 0
const weekday = (date) => (date.getDay() + 6) % 7;

const renderYear = () => {
  let html = `<thead><tr><th>${YEAR}</th>`;
  for (let c = 0; c < COLUMNS; c++) html += `<th>${DAYS[c % 7]}</th>`;
  html += '</tr></thead><tbody>';

  MONTHS.forEach((name, m) => {
    const offset = weekday(new Date(YEAR, m, 1));
    const count = new Date(YEAR, m + 1, 0).getDate();
    html += `<tr><th>${name}</th>`;
    for (let c = 0; c < COLUMNS; c++) {
      const day = c - offset + 1;
      const empty = day < 1 || day > count;
      const classes = [];
      if (c % 7 > 4) classes.push('weekend');
      if (empty) classes.push('empty');
      if (day === 1) classes.push('first');
      if (m === 11 && day === 9) classes.push('selected');
      if (m === 11 && day === 11) classes.push('today');
      html += `<td class="${classes.join(' ')}">${empty ? '' : day}</td>`;
    }
    html += '</tr>';
  });
  document.getElementById('year').innerHTML = html + '</tbody>';
};

const renderMonth = () => {
  const weeks = [48, 49, 50, 51, 52, 1];
  let html = '<thead><tr><th></th>';
  DAYS.forEach(d => { html += `<th>${d.toLowerCase()}</th>`; });
  html += '</tr></thead><tbody>';
  weeks.forEach((week, w) => {
    html += `<tr><th>${week}</th>`;
    for (let d = 0; d < 7; d++) {
      const date = new Date(YEAR, 10, 25 + w * 7 + d);
      const classes = [];
      if (date.getMonth() !== 11) classes.push('other');
      if ((w === 0 && d === 0) || (w === 2 && d === 2)) classes.push('mark');
      html += `<td class="${classes.join(' ')}">${date.getDate()}</td>`;
    }
    html += '</tr>';
  });
  document.getElementById('month').innerHTML = html + '</tbody>';
};

renderYear();
renderMonth();
```
